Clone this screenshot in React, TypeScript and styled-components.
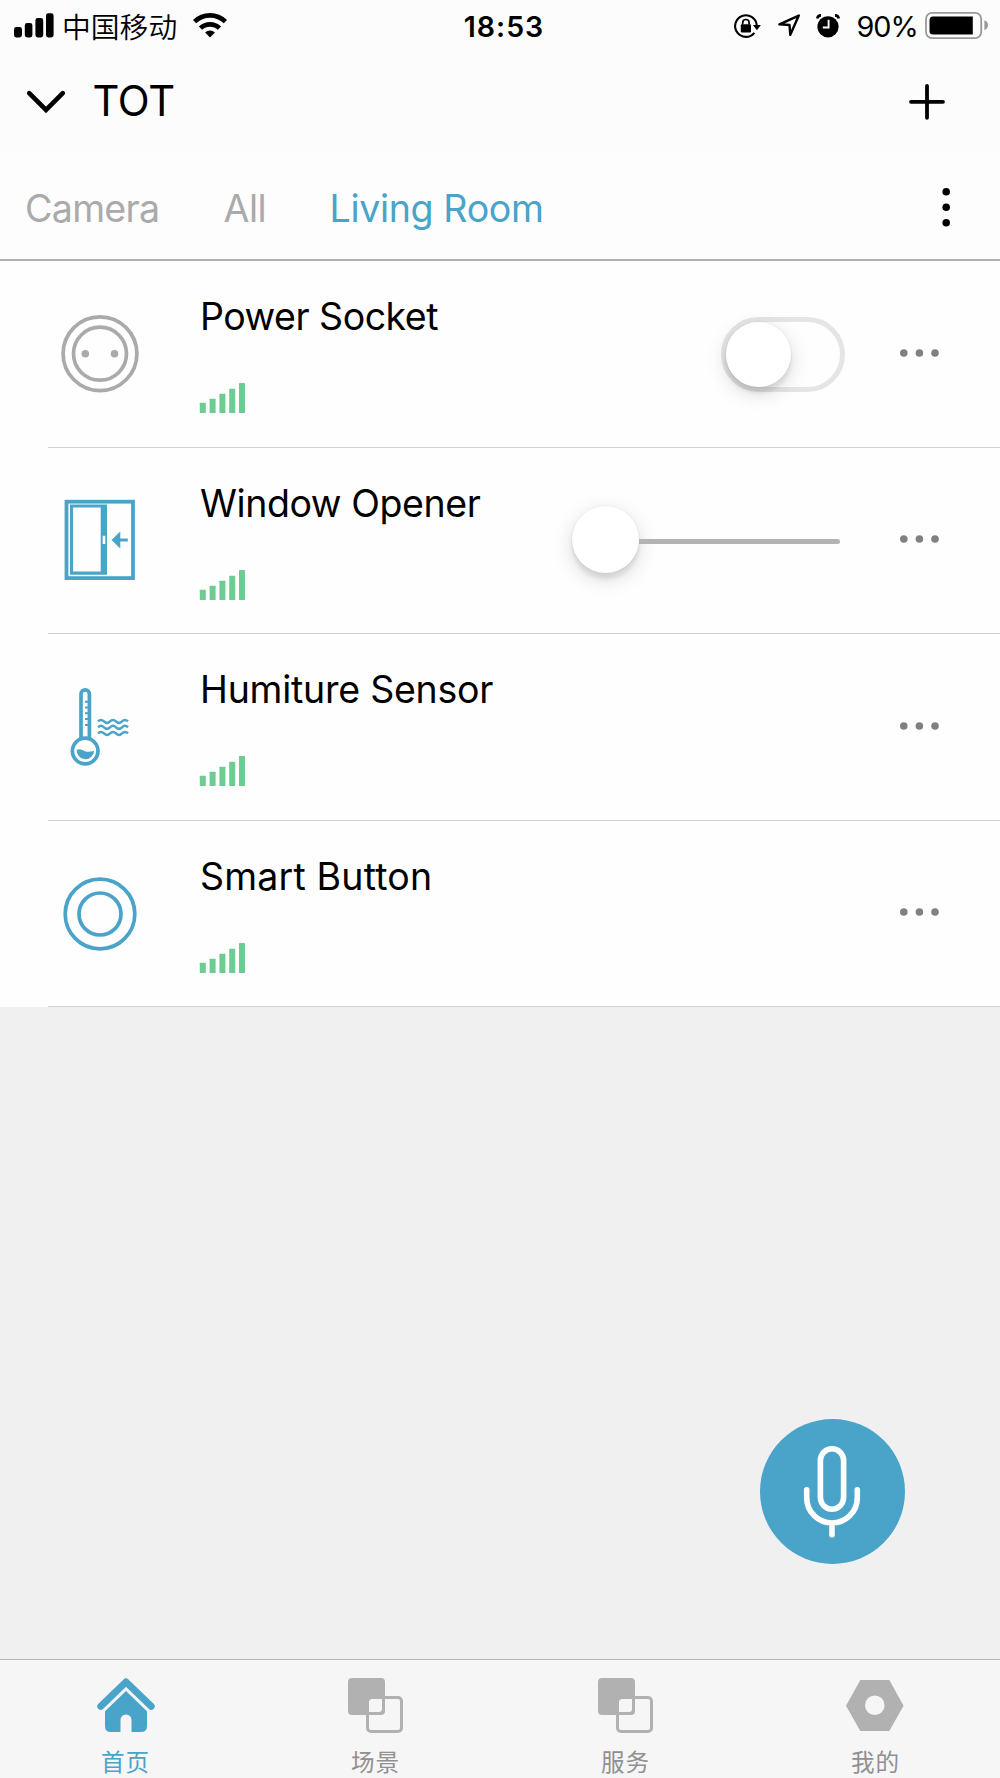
import React from "react";
import styled, { createGlobalStyle } from "styled-components";

const BLUE = "#4aa3c9";
const GREY = "#aaaaaa";

const GlobalStyle = createGlobalStyle`
  * { box-sizing: border-box; }
  body { margin: 0; background: #f0f0f0; }
  svg { display: block; flex: none; overflow: visible; }
`;

const Screen = styled.div`
  width: 1000px;
  height: 1778px;
  display: flex;
  flex-direction: column;
  overflow: hidden;
  background: #f0f0f0;
  color: #000;
  font-family: Inter, "Noto Sans CJK SC", sans-serif;
`;

const Header = styled.header`
  height: 154px;
  flex: none;
  background: #fcfcfc;
`;

const StatusBar = styled.div`
  height: 50px;
  display: grid;
  grid-template-columns: 1fr 90px 1fr;
  align-items: center;
`;

const StatusSide = styled.div<{ $end?: boolean }>`
  height: 50px;
  display: flex;
  align-items: center;
  justify-content: ${(p) => (p.$end ? "flex-end" : "flex-start")};
  padding: ${(p) => (p.$end ? "0 12px 1px 0" : "0 0 0 14px")};
`;

const Carrier = styled.span`
  margin: 0 16px 0 8px;
  font: 350 28.8px/48px "Noto Sans CJK SC", sans-serif;
  white-space: nowrap;
`;

const Clock = styled.span`
  padding: 1px 0 0 8px;
  font-size: 28.5px;
  font-weight: 600;
  line-height: 51px;
  letter-spacing: 1px;
  text-align: center;
  white-space: nowrap;
`;

const Charge = styled.span`
  margin: 2px 7px 0 16px;
  font-size: 28.8px;
  line-height: 50px;
  letter-spacing: -0.9px;
`;

const StatusGlyph = styled.span<{ $gap: number }>`
  display: flex;
  margin-right: ${(p) => p.$gap}px;
`;

const NavBar = styled.div`
  height: 103px;
  display: flex;
  align-items: center;
  padding: 0 55.5px 0 27px;
`;

const NavTitle = styled.h1`
  flex: 1;
  margin: 0 0 2px 27.5px;
  font-size: 41.7px;
  font-weight: 400;
  line-height: 50px;
  letter-spacing: -0.3px;
`;

const IconButton = styled.button`
  display: flex;
  padding: 0;
  border: 0;
  background: none;
`;

const RoomTabs = styled.nav`
  height: 107px;
  flex: none;
  display: flex;
  align-items: center;
  padding: 3px 50px 0 25px;
  background: #fdfdfd;
  border-bottom: 2px solid #b0b0b0;
`;

const RoomTab = styled.button<{ $active?: boolean; $width: number; $spacing: number }>`
  width: ${(p) => p.$width}px;
  padding: 1px 0 0;
  border: 0;
  background: none;
  color: ${(p) => (p.$active ? BLUE : GREY)};
  font: 400 37.6px/46px Inter, sans-serif;
  letter-spacing: ${(p) => p.$spacing}px;
  text-align: left;
  white-space: nowrap;
`;

const Spacer = styled.div`
  flex: 1;
`;

const DeviceList = styled.ul`
  flex: none;
  margin: 0;
  padding: 0;
  list-style: none;
  background: #fefefe;
`;

const DeviceRow = styled.li`
  height: 186.6px;
  display: flex;
  padding-left: 48px;
`;

const DeviceBody = styled.div`
  flex: 1;
  display: flex;
  align-items: center;
  padding: 0 61px 0 10px;
  border-bottom: 1px solid #d2d2d2;
`;

const DeviceInfo = styled.div`
  flex: 1;
  align-self: stretch;
  display: flex;
  flex-direction: column;
  padding: 34.2px 0 0 58px;
`;

const DeviceName = styled.h2<{ $spacing: number }>`
  margin: 0 0 44px;
  font-size: 37.5px;
  font-weight: 400;
  line-height: 44px;
  letter-spacing: ${(p) => p.$spacing}px;
  white-space: nowrap;
`;

const SwitchTrack = styled.div`
  width: 124px;
  height: 75px;
  margin: 1px 55px 0 0;
  border: 5px solid #e5e5e5;
  border-radius: 38px;
`;

const Knob = styled.div<{ $size: number }>`
  width: ${(p) => p.$size}px;
  height: ${(p) => p.$size}px;
  flex: none;
  border-radius: 50%;
  background: #fff;
  box-shadow: 0 6px 20px rgba(0, 0, 0, 0.15), 0 6px 4px rgba(0, 0, 0, 0.08),
    0 0 0 1px rgba(0, 0, 0, 0.03);
`;

const Slider = styled.div`
  width: 268px;
  display: flex;
  align-items: center;
  margin: -2px 60px 0 0;
`;

const SliderTrack = styled.div`
  flex: 1;
  height: 5px;
  margin-top: 5px;
  border-radius: 0 3px 3px 0;
  background: #b3b3b3;
`;

const MoreButton = styled(IconButton)`
  margin-top: -2.4px;
`;

const Stage = styled.main`
  flex: 1;
  display: flex;
  align-items: flex-end;
  justify-content: flex-end;
  padding: 0 95px 95px 0;
`;

const MicButton = styled.button`
  width: 145px;
  height: 145px;
  display: flex;
  align-items: center;
  justify-content: center;
  padding: 1px 0.5px 0 0;
  border: 0;
  border-radius: 50%;
  background: ${BLUE};
`;

const TabBar = styled.nav`
  height: 119px;
  flex: none;
  display: grid;
  grid-template-columns: repeat(4, 1fr);
  border-top: 1px solid #b5b5b5;
  background: #f6f6f6;
`;

const TabItem = styled.button<{ $active?: boolean }>`
  display: flex;
  flex-direction: column;
  align-items: center;
  padding: 18px 0 0 1px;
  border: 0;
  background: none;
  color: ${(p) => (p.$active ? BLUE : "#909090")};
  font: 400 23.6px/36px "Noto Sans CJK SC", sans-serif;
  letter-spacing: 0.8px;
  gap: 8.5px;
`;

const CarrierBars = () => (
  <svg width="40" height="26" viewBox="0 0 40 26">
    <rect x="0" y="14" width="8" height="10.5" rx="2.4" />
    <rect x="10.8" y="10" width="7.6" height="14.5" rx="2.4" />
    <rect x="21.4" y="5" width="7.8" height="19.5" rx="2.4" />
    <rect x="32" y="0.3" width="7.6" height="24.2" rx="2.4" />
  </svg>
);

const WifiIcon = () => (
  <svg width="34" height="26" viewBox="0 0 34 26">
    <g fill="none" stroke="#000" strokeWidth="4.6">
      <path d="M1.6 8.7a22 22 0 0 1 30.8 0" />
      <path d="M7.5 15.2a13.6 13.6 0 0 1 19 0" />
    </g>
    <path d="M12.1 19.6a7 7 0 0 1 9.8 0L17 24.6z" />
  </svg>
);

const RotationLockIcon = () => (
  <svg width="27" height="24" viewBox="0 0 27 24">
    <path d="M20.4 18.8A10.8 10.8 0 1 1 22.7 11" fill="none" stroke="#000" strokeWidth="2.1" />
    <path d="M18.9 11h8l-4 5.2z" />
    <rect x="6.8" y="10.2" width="10.2" height="8.4" rx="1" />
    <path d="M8.7 10.5V8.7a3.2 3.2 0 0 1 6.4 0v1.8" fill="none" stroke="#000" strokeWidth="1.7" />
  </svg>
);

const LocationIcon = () => (
  <svg width="23" height="23" viewBox="0 0 23 23">
    <path d="M1.4 10.3 20.8 1.6 12.3 20.8 11.5 11z" fill="none" stroke="#000" strokeWidth="2.4" strokeLinejoin="round" />
  </svg>
);

const AlarmIcon = () => (
  <svg width="24" height="24" viewBox="0 0 24 24">
    <circle cx="12" cy="12.8" r="10.6" />
    <path d="M1.2 4.6Q1.8 1.4 5 1.4M22.8 4.6Q22.2 1.4 19 1.4" fill="none" stroke="#000" strokeWidth="2.6" />
    <path d="M12.6 5.8v7.7H6.8" fill="none" stroke="#fcfcfc" strokeWidth="1.9" />
  </svg>
);

const BatteryIcon = () => (
  <svg width="63" height="27" viewBox="0 0 63 27">
    <rect x="1" y="0.9" width="55.2" height="25.2" rx="6" fill="none" stroke="#999" strokeWidth="1.8" />
    <path d="M8 4.5h39.8v18H8a3.5 3.5 0 0 1-3.5-3.5V8A3.5 3.5 0 0 1 8 4.5z" />
    <path d="M59.4 8.3q3.6 1.4 3.6 4.9t-3.6 4.9z" fill="#999" />
  </svg>
);

const SignalIcon = () => (
  <svg width="46" height="30" viewBox="0 0 46 30" fill="#6ecb92">
    {[10.3, 14.3, 19.3, 24.2, 30].map((h, i) => (
      <rect key={h} x={-0.2 + 9.8 * i} y={30 - h} width="6" height={h} rx="0.6" />
    ))}
  </svg>
);

const SocketIcon = () => (
  <svg width="84" height="84" viewBox="0 0 84 84">
    <g fill="none" stroke={GREY} strokeWidth="3.7">
      <circle cx="42" cy="41.7" r="36.9" />
      <circle cx="42" cy="41.7" r="26.5" />
    </g>
    <circle cx="27.3" cy="41.7" r="3.8" fill={GREY} />
    <circle cx="56.5" cy="41.7" r="3.8" fill={GREY} />
  </svg>
);

const WindowIcon = () => (
  <svg width="84" height="84" viewBox="0 0 84 84" fill={BLUE}>
    <rect x="8.5" y="3.7" width="66.5" height="76.4" fill="none" stroke={BLUE} strokeWidth="3.8" />
    <path fillRule="evenodd" d="M12 6.5h37v70.3H12zM15.1 9.6h27.6v64H15.1zM44.7 37.8v8.2h2.6v-8.2z" />
    <path d="M53.5 42 62.3 33.4v7h7.5v3.2h-7.5v7z" />
  </svg>
);

const ThermometerIcon = () => (
  <svg width="84" height="84" viewBox="0 0 84 84" fill="none" stroke={BLUE} strokeWidth="3.7">
    <path d="M23 54.4V9a4.2 4.2 0 0 1 8.4 0v45.4" />
    <circle cx="27.2" cy="66" r="12.8" />
    <path d="M27 16.8h4M27 22.6h4M27 28.3h4M27 34h4M27 40h4" strokeWidth="2" />
    <path d="M18.6 65c3-2 6 .5 9 1.4 3 .8 5.6-.2 8.5-.4a8.7 8.7 0 0 1-17.5-1z" fill={BLUE} stroke="none" />
    {[35.4, 41.3, 47.4].map((y) => (
      <path key={y} d={`M40 ${y + 1}q3-3 6 0t6 0t6 0t6 0t6 0`} strokeWidth="2.4" />
    ))}
  </svg>
);

const ButtonIcon = () => (
  <svg width="84" height="84" viewBox="0 0 84 84" fill="none" stroke={BLUE} strokeWidth="3.7">
    <circle cx="42" cy="42" r="34.8" />
    <circle cx="42" cy="42" r="21" />
  </svg>
);

const MoreIcon = () => (
  <svg width="39" height="8" viewBox="0 0 39 8" fill="#808080">
    <circle cx="3.8" cy="4" r="3.8" />
    <circle cx="19.4" cy="4" r="3.8" />
    <circle cx="35" cy="4" r="3.8" />
  </svg>
);

const MicIcon = () => (
  <svg width="58" height="93" viewBox="0 0 58 93" fill="none" stroke="#fff" strokeWidth="5.6" strokeLinecap="round">
    <rect x="17.4" y="2.8" width="23.2" height="60.4" rx="11.6" />
    <path d="M3.7 43.7v8a25.3 25.3 0 0 0 50.6 0v-8M29 77v11.8" />
  </svg>
);

const HomeIcon = () => (
  <svg width="58" height="56" viewBox="0 0 58 56" fill={BLUE}>
    <path d="M3.8 28.3 29 4l25.2 24.3" fill="none" stroke={BLUE} strokeWidth="7" strokeLinecap="round" strokeLinejoin="round" />
    <path d="M29 13 50 33.3V48q0 6-6 6h-9.5V42a5.5 5.5 0 0 0-11 0v12H14q-6 0-6-6V33.3z" />
  </svg>
);

const SceneIcon = () => (
  <svg width="56" height="56" viewBox="0 0 56 56">
    <path
      fill="#b1b1b1"
      fillRule="evenodd"
      d="M4 0h29a4 4 0 0 1 4 4v29a4 4 0 0 1-4 4H4a4 4 0 0 1-4-4V4a4 4 0 0 1 4-4zM24 21a3 3 0 0 0-3 3v10h10a3 3 0 0 0 3-3V21z"
    />
    <rect x="19.5" y="19.5" width="34" height="34" rx="3.5" fill="none" stroke="#b1b1b1" strokeWidth="3" />
  </svg>
);

const NutIcon = () => (
  <svg width="59" height="56" viewBox="0 0 59 56">
    <path fill="#b1b1b1" fillRule="evenodd" d="M0 27.7 14.3 2h29L57.6 27.7 43.3 53h-29zM28.8 17.5a9.8 9.8 0 1 0 0 19.6 9.8 9.8 0 0 0 0-19.6z" />
  </svg>
);

const devices = [
  { name: "Power Socket", spacing: -0.5, icon: <SocketIcon />, control: "switch" },
  { name: "Window Opener", spacing: -0.42, icon: <WindowIcon />, control: "slider" },
  { name: "Humiture Sensor", spacing: -0.24, icon: <ThermometerIcon />, control: null },
  { name: "Smart Button", spacing: 0.18, icon: <ButtonIcon />, control: null },
];

const sections = [
  { label: "首页", icon: <HomeIcon />, active: true },
  { label: "场景", icon: <SceneIcon /> },
  { label: "服务", icon: <SceneIcon /> },
  { label: "我的", icon: <NutIcon /> },
];

export default function App() {
  return (
    <Screen>
      <GlobalStyle />
      <Header>
        <StatusBar>
          <StatusSide>
            <CarrierBars />
            <Carrier>中国移动</Carrier>
            <WifiIcon />
          </StatusSide>
          <Clock>18:53</Clock>
          <StatusSide $end>
            <StatusGlyph $gap={16.5}><RotationLockIcon /></StatusGlyph>
            <StatusGlyph $gap={15.5}><LocationIcon /></StatusGlyph>
            <StatusGlyph $gap={0}><AlarmIcon /></StatusGlyph>
            <Charge>90%</Charge>
            <BatteryIcon />
          </StatusSide>
        </StatusBar>
        <NavBar>
          <IconButton aria-label="Switch home">
            <svg width="38" height="22" viewBox="0 0 38 22">
              <path d="M2.2 2.2 19 19 35.8 2.2" fill="none" stroke="#000" strokeWidth="4.6" strokeLinecap="round" />
            </svg>
          </IconButton>
          <NavTitle>TOT</NavTitle>
          <IconButton aria-label="Add device">
            <svg width="36" height="36" viewBox="0 0 36 36">
              <path d="M18 1.8v32M2 17.8h32" stroke="#000" strokeWidth="3.8" strokeLinecap="round" />
            </svg>
          </IconButton>
        </NavBar>
      </Header>
      <RoomTabs>
        <RoomTab $width={198.5} $spacing={-0.7}>Camera</RoomTab>
        <RoomTab $width={106} $spacing={-0.5}>All</RoomTab>
        <RoomTab $width={215} $spacing={-0.36} $active>Living Room</RoomTab>
        <Spacer />
        <IconButton aria-label="Room options">
          <svg width="8" height="40" viewBox="0 0 8 40">
            <circle cx="4.2" cy="3.8" r="3.8" />
            <circle cx="4.2" cy="19.3" r="3.8" />
            <circle cx="4.2" cy="34.8" r="3.8" />
          </svg>
        </IconButton>
      </RoomTabs>
      <DeviceList>
        {devices.map((d) => (
          <DeviceRow key={d.name}>
            <DeviceBody>
              {d.icon}
              <DeviceInfo>
                <DeviceName $spacing={d.spacing}>{d.name}</DeviceName>
                <SignalIcon />
              </DeviceInfo>
              {d.control === "switch" && (
                <SwitchTrack>
                  <Knob $size={65} />
                </SwitchTrack>
              )}
              {d.control === "slider" && (
                <Slider>
                  <Knob $size={67} />
                  <SliderTrack />
                </Slider>
              )}
              <MoreButton aria-label={`${d.name} options`}>
                <MoreIcon />
              </MoreButton>
            </DeviceBody>
          </DeviceRow>
        ))}
      </DeviceList>
      <Stage>
        <MicButton aria-label="Voice control">
          <MicIcon />
        </MicButton>
      </Stage>
      <TabBar>
        {sections.map((s) => (
          <TabItem key={s.label} $active={s.active}>
            {s.icon}
            {s.label}
          </TabItem>
        ))}
      </TabBar>
    </Screen>
  );
}
